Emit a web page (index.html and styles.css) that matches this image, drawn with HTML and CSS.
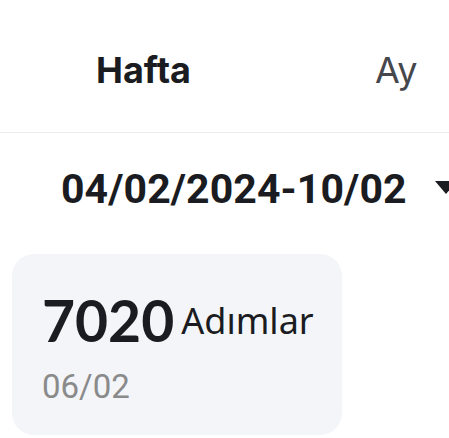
FILE: index.html
```html
<!DOCTYPE html>
<html lang="tr">
<head>
<meta charset="utf-8">
<link rel="stylesheet" href="styles.css">
</head>
<body>
<div class="screen">
  <nav class="tabs">
    <span class="tab active">Hafta</span>
    <span class="tab">Ay</span>
  </nav>
  <div class="range">
    <span class="range-text">04/02/2024-10/02</span>
    <svg class="caret" width="22" height="14" viewBox="0 0 22 14"><polygon points="0,0 22,0 11,13" fill="#1a1c21"/></svg>
  </div>
  <div class="card">
    <div class="card-main">
      <span class="count">7020</span>
      <span class="unit">Adımlar</span>
    </div>
    <div class="date">06/02</div>
  </div>
</div>
</body>
</html>
```
FILE: styles.css
```css
html, body {
  margin: 0;
  padding: 0;
  background: #ffffff;
  overflow: hidden;
}
.screen {
  width: 449px;
  height: 438px;
  overflow: hidden;
  font-family: Roboto, "Noto Sans", sans-serif;
  color: #1a1c21;
}
.tabs {
  display: flex;
  align-items: center;
  height: 133px;
  border-bottom: 1px solid #ededed;
  padding-left: 96px;
  gap: 184px;
  box-sizing: border-box;
}
.tab {
  font-size: 36px;
  line-height: 1;
  color: #45474d;
  font-family: Inter, Roboto, sans-serif;
  padding-top: 8px;
}
.tab.active {
  font-weight: 700;
  color: #1a1c21;
}
.range {
  display: flex;
  align-items: center;
  padding-left: 61px;
  margin-top: 36px;
  white-space: nowrap;
  gap: 28px;
}
.range-text {
  font-size: 41px;
  font-weight: 700;
  line-height: 1;
  letter-spacing: 0.1px;
}
.caret {
  flex: none;
  margin-top: -4px;
}
.card {
  margin: 44px 0 0 12px;
  width: 330px;
  height: 181px;
  background: #f3f5f8;
  border-radius: 22px;
  box-sizing: border-box;
  padding: 38px 0 0 30px;
}
.card-main {
  display: flex;
  align-items: center;
  gap: 7px;
}
.count {
  font-family: Lato, sans-serif;
  font-weight: 700;
  font-size: 57px;
  line-height: 1;
}
.unit {
  font-family: "Noto Sans", sans-serif;
  font-size: 36px;
  line-height: 1;
}
.date {
  margin-top: 21px;
  font-size: 33px;
  color: #8a8a8a;
  line-height: 1;
}
```
